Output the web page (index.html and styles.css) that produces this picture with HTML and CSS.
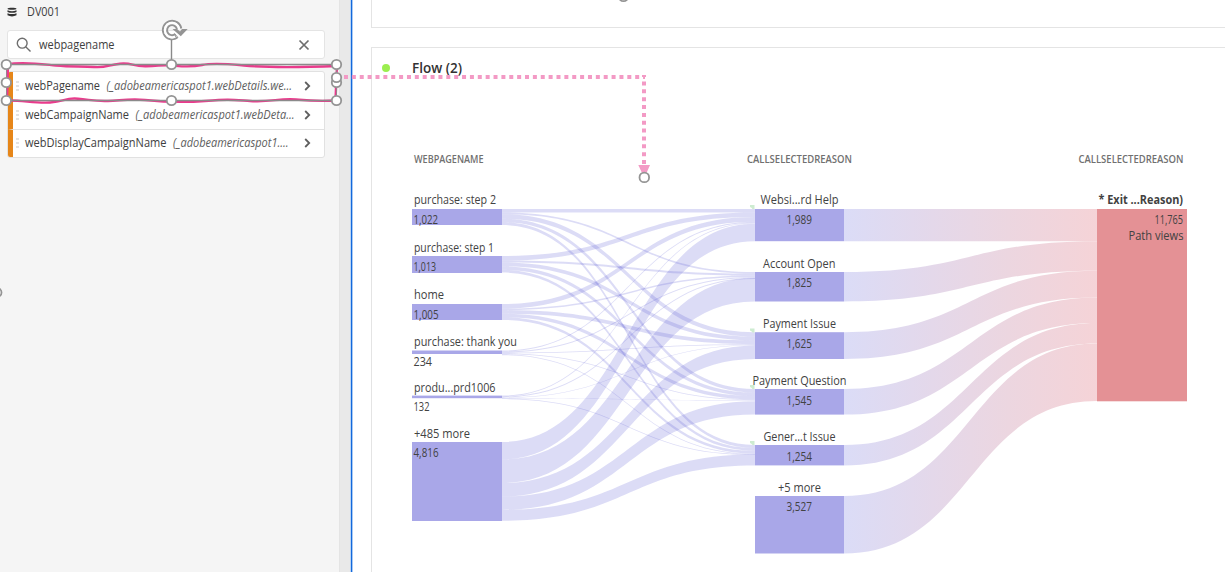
FILE: index.html
```html
<!DOCTYPE html>
<html lang="en">
<head>
<meta charset="utf-8">
<title>Flow</title>
<link rel="stylesheet" href="styles.css">
</head>
<body>
<div class="app">
  <aside class="panel">
    <header class="source">
      <svg class="db" width="10" height="10" viewBox="0 0 10 10"><path d="M.5 1.7C.5.3 9.500.3 9.500 1.700S.5 3.100.5 1.700ZM.5 3.300Q5 5.100 9.500 3.300V5Q5 6.700.5 5ZM.5 6.200Q5 8 9.500 6.200V8.300Q5 10.500.5 8.300Z" fill="#323232"/></svg>
      <svg class="label" width="34" height="18"><text x="0" y="13" textLength="33">DV001</text></svg>
    </header>
    <div class="search">
      <svg width="16" height="16" viewBox="0 0 16 16" fill="none" stroke="#6e6e6e" stroke-width="1.400"><circle cx="6.200" cy="6.200" r="4.900"/><path d="M9.700 9.700L14.500 14.500"/></svg>
      <svg class="label query" width="80" height="18"><text x="0" y="13" textLength="75.500">webpagename</text></svg>
      <svg class="clear" width="12" height="12" viewBox="0 0 12 12" stroke="#6e6e6e" stroke-width="1.700"><path d="M1.500 1.500L10.500 10.500M10.500 1.500L1.500 10.500"/></svg>
    </div>
    <ul class="fields">
      <li><i class="grip"></i><svg class="label" width="272" height="18"><text x="0" y="13" textLength="75">webPagename</text><text class="path" x="81.500" y="13" textLength="185.500">(_adobeamericaspot1.webDetails.we...</text></svg><svg class="chev" width="7" height="10"><path d="M1.200 1L5.200 5L1.200 9"/></svg></li>
      <li><i class="grip"></i><svg class="label" width="272" height="18"><text x="0" y="13" textLength="104">webCampaignName</text><text class="path" x="110.500" y="13" textLength="159">(_adobeamericaspot1.webDeta...</text></svg><svg class="chev" width="7" height="10"><path d="M1.200 1L5.200 5L1.200 9"/></svg></li>
      <li><i class="grip"></i><svg class="label" width="272" height="18"><text x="0" y="13" textLength="141.500">webDisplayCampaignName</text><text class="path" x="148" y="13" textLength="115.500">(_adobeamericaspot1....</text></svg><svg class="chev" width="7" height="10"><path d="M1.200 1L5.200 5L1.200 9"/></svg></li>
    </ul>
  </aside>
  <div class="gutter"></div>
  <main class="canvas">
    <section class="card previous"></section>
    <section class="card flow">
      <header class="title"><i class="dot"></i><svg class="label heading" width="54" height="20"><text x="0" y="14.500" textLength="50">Flow (2)</text></svg></header>
      <svg class="chart" id="chart" width="853" height="432" viewBox="372 140 853 432">
        <defs><linearGradient id="exit" gradientUnits="userSpaceOnUse" x1="844" y1="0" x2="1097" y2="0"><stop offset="0" stop-color="#dbdcf7"/><stop offset=".35" stop-color="#e4d8ea"/><stop offset=".65" stop-color="#ecd6e0"/><stop offset="1" stop-color="#f5d3d7"/></linearGradient></defs>
      </svg>
    </section>
  </main>
</div>
<svg class="annotation" width="1225" height="572" fill="none">
  <g stroke="#ea3a8c" stroke-width="2.400">
    <path d="M7 64.500C22 61.500 40 64 56 65.500S82 66 94 67S108 65 120 63.700S132 66.500 146 66.300S160 64.500 172 65.500S190 67.500 202 65S228 64 244 65.500S285 68 337 66"/>
    <path d="M7 100.500C22 100 35 103.500 50 102.500S65 97.500 78 98.700S95 101.500 108 101S130 98.500 145 100S180 103 205 101S230 99.500 250 101S280 98 296 99.500S315 101.500 337 100.500"/>
    <path d="M8 65L7 100M337 65L335.500 100"/>
  </g>
  <path d="M6 64.500H337M6 100.500H337M171.500 40V64" stroke="#8a8a8a" stroke-width="1.400"/>
  <path d="M6.500 65V100M336.500 65V100" stroke="#9a7f8c"/>
  <g stroke="#f39ac5" stroke-width="4"><path d="M344 77H645" stroke-dasharray="4 3.870"/><path d="M644 75V164" stroke-dasharray="2 4.500 4 3.850 4 3.850 4 3.850 4 3.850 4 3.850 4 3.850 4 3.850 4 3.850 4 3.850 4 3.850 4 3.850"/></g>
  <path d="M638.300 165H650L646.500 173H642Z" fill="#f39ac5"/>
  <g fill="#fff" stroke="#949494" stroke-width="1.800"><circle cx="6.300" cy="64.500" r="4.700"/><circle cx="171.500" cy="64.500" r="4.700"/><circle cx="336.500" cy="64.500" r="4.700"/><circle cx="6.300" cy="82.500" r="4.700"/><circle cx="336.500" cy="82.500" r="4.700"/><circle cx="336.500" cy="77.500" r="4.700"/><circle cx="6.300" cy="100.500" r="4.700"/><circle cx="171.500" cy="100.500" r="4.700"/><circle cx="336.500" cy="100.500" r="4.700"/><circle cx="644.300" cy="177.400" r="4.800"/><circle cx="623.500" cy="-3.500" r="4.700"/><circle cx="-3" cy="292.500" r="4.500"/></g>
  <g class="rotate">
    <path d="M177.300 37.800A9.300 9.300 0 1 1 181.300 28.500" stroke="#949494" stroke-width="1.900"/>
    <path d="M176.200 35.700A7 7 0 1 1 179 29.500" stroke="#fff" stroke-width="2.600"/>
    <path d="M175.300 34A5 5 0 1 1 177 29.300" stroke="#949494" stroke-width="1.900"/>
    <path d="M176.200 37.800L174.600 33.800L177.900 37.400Z" stroke="#949494"/>
    <path d="M172.500 29H177L180 31.500L182 29H187.700L180.800 36.300Z" fill="#949494"/>
  </g>
</svg>
<script src="chart.js"></script>
</body>
</html>
```
FILE: styles.css
```css
* { box-sizing: border-box; }
body { margin: 0; background: #fff; font-family: "Open Sans", "Noto Sans", sans-serif; overflow: hidden; }
.app { display: flex; height: 572px; }
.panel { width: 339px; background: #f5f5f5; padding: 3px 14px 0 7px; }
.source { display: flex; align-items: center; gap: 10px; height: 18px; }
.label { display: block; overflow: visible; font-size: 12.8px; fill: #3e3e3e; flex: none; }
.label .path { font-style: italic; fill: #606060; }
.search { display: flex; align-items: center; height: 29px; margin-top: 9px; padding: 0 14px 0 8px; background: #fff; border: 1px solid #e4e4e4; border-radius: 3px; }
.query { margin-left: 7px; font-size: 13px; }
.clear { margin-left: auto; }
.fields { list-style: none; margin: 12px 0 0; padding: 0; border: 1px solid #e1e1e1; border-radius: 3px; background: #fff; overflow: hidden; }
.fields li { display: flex; align-items: center; height: 28px; border-left: 5px solid #e68619; }
.fields li + li { border-top: 1px solid #e1e1e1; height: 28.500px; border-left-color: #e68619; }
.grip { width: 3px; height: 10px; margin: 0 6px 0 3px; background: repeating-linear-gradient(#e3e3e3 0 2px, transparent 2px 4px); }
.chev { margin-left: 7px; fill: none; stroke: #606060; stroke-width: 1.800; }
.gutter { width: 14px; background: linear-gradient(90deg, #e4e4e4 0 1px, #e9e9e9 1px 11px, #b9d3f3 11px 12px, #1268dc 12px 13px, #a9c9f2 13px); }
.canvas { flex: 1; padding-left: 18px; }
.card { border: 1px solid #e4e4e4; border-width: 0 0 1px 1px; }
.previous { height: 28px; }
.flow { margin-top: 19px; height: 525px; border-width: 1px 0 0 1px; }
.title { height: 92px; display: flex; align-items: flex-start; padding: 10px 0 0 10px; }
.dot { width: 8px; height: 8px; margin-top: 6px; border-radius: 50%; background: #9bee4f; }
.heading { margin-left: 22px; font-size: 14px; font-weight: 600; fill: #323232; }
.chart { display: block; font-size: 12.8px; }
.chart text { fill: #424242; }
.chart .column { font-size: 10px; font-weight: 600; fill: #707070; }
.chart .strong { font-weight: 700; }
.link { fill: #5150d3; fill-opacity: .2; }
.exit-link { fill: url(#exit); }
.node { fill: #a9a7e8; }
.exit-node { fill: #e49195; }
.marker { fill: #ceecd1; }
.annotation { position: absolute; left: 0; top: 0; }
```
FILE: chart.js
```js
const chart = document.getElementById('chart');

function add(tag, attrs, text) {
  const el = document.createElementNS('http://www.w3.org/2000/svg', tag);
  for (const key in attrs) el.setAttribute(key, attrs[key]);
  if (text) el.textContent = text;
  chart.appendChild(el);
}

function ribbon(x0, x1, y0, y1, h, cls) {
  const m = (x0 + x1) / 2;
  add('path', { class: cls, d: `M${x0} ${y0}C${m} ${y0} ${m} ${y1} ${x1} ${y1}V${y1 + h}C${m} ${y1 + h} ${m} ${y0 + h} ${x0} ${y0 + h}Z` });
}

function label(text, x, y, width, cls = 'name') {
  add('text', { x, y, textLength: width, lengthAdjust: 'spacingAndGlyphs', class: cls }, text);
}

// name, name baseline, name width, value, value baseline, value width, top, height, flow sizes
const pages = [
  ['purchase: step 2', 204, 82, '1,022', 224, 24.5, 209, 16, [3.5, 1.7, 4.4, 3.5, 3]],
  ['purchase: step 1', 252, 80, '1,013', 271, 22.5, 256, 17, [4.6, 1.8, 3.9, 3.5, 2.8]],
  ['home', 299, 30, '1,005', 319, 25, 304, 16, [4.6, 1.5, 3.7, 3.3, 2.8]],
  ['purchase: thank you', 346, 103, '234', 366, 18.5, 350.5, 3.5, [1, 1.1, .8, .9, .9]],
  ['produ...prd1006', 392, 81.5, '132', 411, 16, 395.6, 2.6, [.9, 1, .4, .6, .6]],
  ['+485 more', 438, 56, '4,816', 457, 25, 442, 79, [17.5, 23.5, 13.6, 13.4, 10.8]]
];

// name, name baseline, name x, name width, value, value baseline, top, height
const reasons = [
  ['Websi...rd Help', 204, 760.5, 78, '1,989', 224, 209, 32.2],
  ['Account Open', 267.5, 763, 72.5, '1,825', 287, 272, 29.5],
  ['Payment Issue', 328, 763, 73, '1,625', 347.5, 332.2, 26.8],
  ['Payment Question', 385, 752.5, 94, '1,545', 405, 389, 25.6],
  ['Gener...t Issue', 441, 763.5, 72, '1,254', 460.5, 445, 20.4],
  ['+5 more', 491.5, 778, 43, '3,527', 511, 496, 57.5]
];

const filled = reasons.map(r => r[6]);
pages.forEach(p => {
  let y = p[6];
  const isRest = p[0] === '+485 more';
  p[8].forEach((h, i) => {
    // the aggregate row closes each target, so it is aligned to the node's bottom edge
    const target = isRest ? reasons[i][6] + reasons[i][7] - h : filled[i];
    ribbon(502, 755, y, target, h, 'link');
    y += h;
    filled[i] += h;
  });
  add('rect', { class: 'node', x: 412, y: p[6], width: 90, height: p[7] });
});

let exitY = 209;
reasons.forEach(r => {
  ribbon(844, 1097, r[6], exitY, r[7], 'exit-link');
  exitY += r[7];
  add('rect', { class: 'node', x: 755, y: r[6], width: 89, height: r[7] });
});
add('rect', { class: 'exit-node', x: 1097, y: 209, width: 90, height: 192.3 });

[205, 328.5, 385, 441].forEach(y => {
  add('path', { class: 'marker', d: `M750 ${y}h4.500v4h-2q-1-1.500-2.500-2z` });
});

pages.forEach(p => {
  label(p[0], 414, p[1], p[2]);
  label(p[3], 413.5, p[4], p[5]);
});
reasons.forEach(r => {
  label(r[0], r[2], r[1], r[3]);
  label(r[4], 786.5, r[5], 25.5);
});

label('WEBPAGENAME', 414, 163, 69.5, 'column');
label('CALLSELECTEDREASON', 747, 163, 105, 'column');
label('CALLSELECTEDREASON', 1078.5, 163, 105, 'column');
label('* Exit ...Reason)', 1098.5, 204, 84.5, 'strong');
label('11,765', 1154.5, 224, 28.5);
label('Path views', 1128.5, 239.5, 55);

document.querySelectorAll('.label text').forEach(t => t.setAttribute('lengthAdjust', 'spacingAndGlyphs'));
```
